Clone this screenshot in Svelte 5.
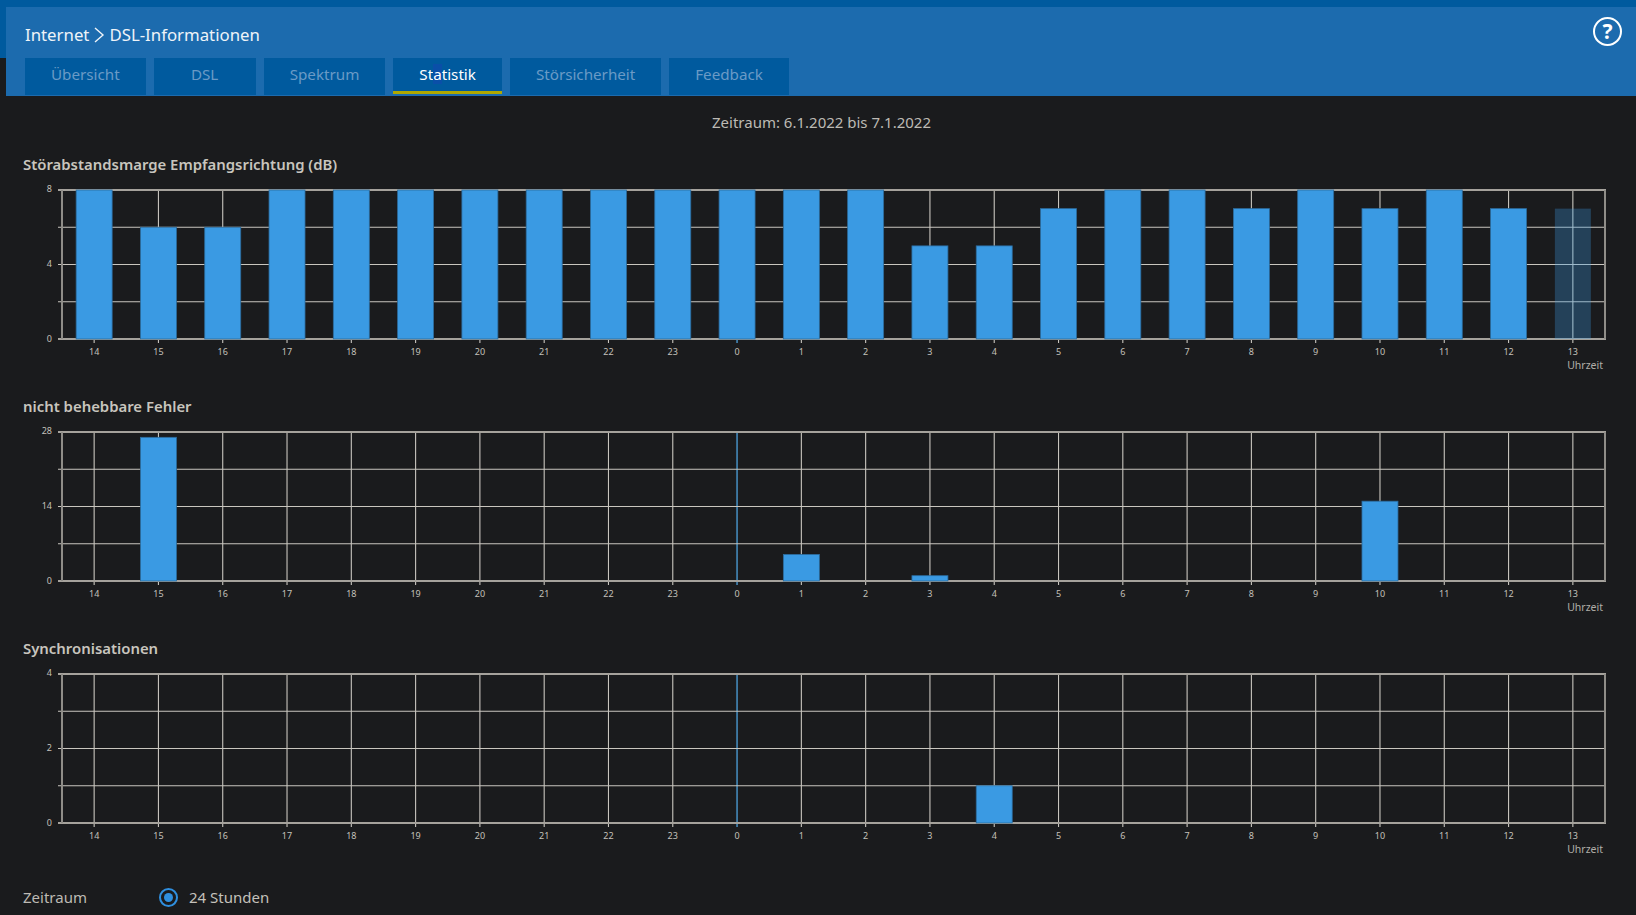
<script>
  const hours = [14,15,16,17,18,19,20,21,22,23,0,1,2,3,4,5,6,7,8,9,10,11,12,13];
  const charts = [
    { title: 'Störabstandsmarge Empfangsrichtung (dB)', max: 8, ticks: [8,4,0],
      values: [8,6,6,8,8,8,8,8,8,8,8,8,8,5,5,7,8,8,7,8,7,8,7,7], ghost: 23 },
    { title: 'nicht behebbare Fehler', max: 28, ticks: [28,14,0],
      values: [0,27,0,0,0,0,0,0,0,0,0,5,0,1,0,0,0,0,0,0,15,0,0,0], ghost: -1 },
    { title: 'Synchronisationen', max: 4, ticks: [4,2,0],
      values: [0,0,0,0,0,0,0,0,0,0,0,0,0,0,1,0,0,0,0,0,0,0,0,0], ghost: -1 }
  ];
  const tabs = ['Übersicht','DSL','Spektrum','Statistik','Störsicherheit','Feedback'];
  const L = 62, R = 1605, T = 14, H = 149;
  const step = (R - L) / 24;
  const cx = (i) => L + step * (i + 0.5);
  const lines = [0.25, 0.5, 0.75];
</script>

<header class="header">
  <div class="panel">
    <div class="title-row">
      <h1 class="crumb">
        <span>Internet</span>
        <svg class="chev" width="12" height="18" viewBox="0 0 12 18"><path d="M2 2l8 7-8 7" fill="none" stroke="#eef3f8" stroke-width="1.4"/></svg>
        <span>DSL-Informationen</span>
      </h1>
      <span class="help">?</span>
    </div>
    <nav class="tabs">
      {#each tabs as t, i}
        <div class="tab" class:active={i === 3}>
          {#if i === 3}St<span class="mark">a</span>tistik{:else}{t}{/if}
        </div>
      {/each}
    </nav>
  </div>
</header>

<main>
  <p class="period">Zeitraum: 6.1.2022 bis 7.1.2022</p>

  {#each charts as c}
    <section class="chart">
      <h2>{c.title}</h2>
      <svg class="plot" width="1636" height="218" viewBox="0 0 1636 218">
        {#each hours as h, i}
          <line x1={cx(i)} x2={cx(i)} y1={T} y2={T + H + 4} class={h === 0 ? 'zero' : 'grid'} />
        {/each}
        {#each lines as f}
          <line x1={L - 4} x2={R} y1={T + H * f} y2={T + H * f} class="grid" />
        {/each}
        <line x1={L - 4} x2={R + 1} y1={T} y2={T} class="frame" />
        <line x1={L - 4} x2={R + 1} y1={T + H} y2={T + H} class="frame" />
        <line x1={L} x2={L} y1={T} y2={T + H} class="axis" />
        <line x1={R} x2={R} y1={T} y2={T + H} class="axis" />
        {#each c.values as v, i}
          {#if v > 0}
            <rect x={cx(i) - 18} y={T + H - (H * v) / c.max} width="36" height={(H * v) / c.max}
              class={i === c.ghost ? 'ghost' : 'bar'} />
          {/if}
        {/each}
        {#each c.ticks as t, i}
          <text x="52" y={T + (H * i) / 2 + (i === 2 ? 3 : 2)} text-anchor="end" class="tick">{t}</text>
        {/each}
        {#each hours as h, i}
          <text x={cx(i)} y={T + H + 16} text-anchor="middle" class="tick">{h}</text>
        {/each}
        <text x="1603" y={T + H + 30} text-anchor="end" class="unit">Uhrzeit</text>
      </svg>
    </section>
  {/each}

  <div class="range">
    <span class="range-label">Zeitraum</span>
    <label class="radio"><span class="dot"></span>24 Stunden</label>
  </div>
</main>

<style>
  :global(body) {
    background: #1a1b1d;
    color: #c4c1bb;
    font-family: "Noto Sans", "Open Sans", sans-serif;
    overflow: hidden;
  }
  .header {
    padding: 7px 0 0 6px;
    background-image: linear-gradient(#005a9e 58px, transparent 58px);
  }
  .panel {
    background: #1c6bae;
    height: 89px;
    padding: 0 0 0 19px;
    box-sizing: border-box;
  }
  .title-row {
    height: 51px;
    display: flex;
    align-items: center;
    justify-content: space-between;
    padding-right: 14px;
  }
  .crumb {
    margin: 0;
    font-size: 16.8px;
    font-weight: 400;
    color: #eef3f8;
    display: flex;
    align-items: center;
    gap: 4px;
    padding-top: 4px;
  }
  .help {
    width: 25px;
    height: 25px;
    border: 2px solid #fff;
    border-radius: 50%;
    color: #fff;
    font-size: 21px;
    font-weight: 700;
    line-height: 25px;
    text-align: center;
    margin-top: -2px;
  }
  .tabs {
    display: flex;
    gap: 8px;
  }
  .tab {
    height: 37px;
    min-width: 102px;
    box-sizing: border-box;
    padding: 0 26px;
    line-height: 33px;
    text-align: center;
    background: #005a9e;
    color: #6a9ac6;
    font-size: 15.2px;
    white-space: nowrap;
  }
  .tab.active {
    color: #fff;
    border-bottom: 3px solid #b0a800;
    height: 36px;
  }
  .mark { background: #0a4fa8; }
  .period {
    margin: 0;
    padding: 14px 0 18px 7px;
    line-height: 24px;
    font-size: 15px;
    text-align: center;
    color: #bdbab4;
  }
  .chart { height: 241.8px; }
  h2 {
    margin: 0;
    padding-left: 23px;
    font-size: 14.9px;
    line-height: 24px;
    font-weight: 600;
    color: #c8c5be;
  }
  .plot { display: block; }
  .grid { stroke: #c9c6bf; stroke-width: 1.1; }
  .zero { stroke: #3f7ca8; stroke-width: 1.8; }
  .frame { stroke: #a5a29c; stroke-width: 2; }
  .axis { stroke: #8f8d88; stroke-width: 2; }
  .bar { fill: #3a9ae3; stroke: #2c6b9c; stroke-width: 0.8; }
  .ghost { fill: #3a9ae3; fill-opacity: 0.3; }
  .tick { fill: #c4c1bb; font-size: 9px; }
  .unit { fill: #b0aea8; font-size: 10.5px; }
  .range {
    margin-top: 8px;
    padding-left: 23px;
    display: flex;
    line-height: 24px;
    font-size: 15px;
  }
  .range-label { width: 136px; color: #bdbab4; }
  .radio { display: flex; align-items: center; gap: 11px; color: #c4c1bb; }
  .dot {
    width: 19px;
    height: 19px;
    box-sizing: border-box;
    border: 2px solid #2f8fdf;
    border-radius: 50%;
    padding: 3px;
    background: #2f8fdf content-box;
  }
</style>
